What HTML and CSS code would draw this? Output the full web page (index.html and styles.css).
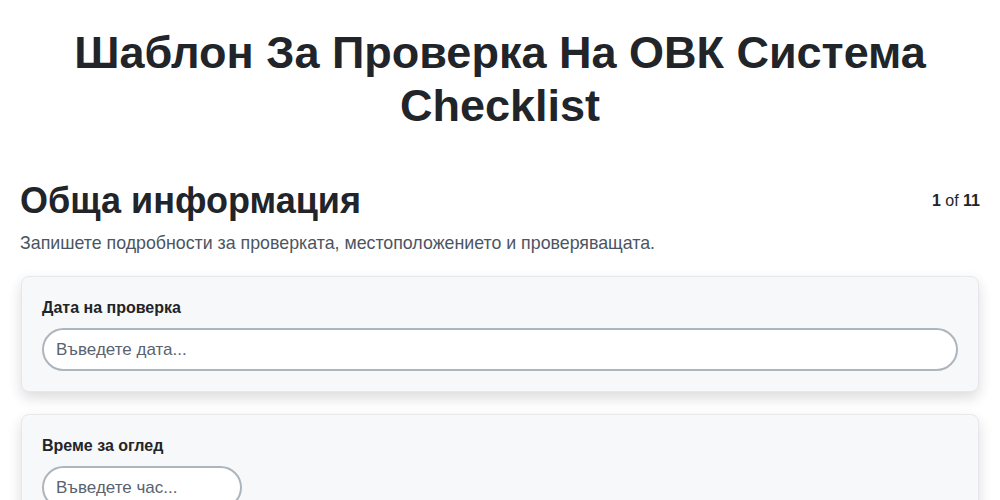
FILE: index.html
```html
<!DOCTYPE html>
<html lang="bg">
<head>
    <meta charset="UTF-8">
    <meta name="viewport" content="width=device-width, initial-scale=1.0">
    <title>Шаблон За Проверка На ОВК Система Checklist</title>
    <link rel="stylesheet" href="styles.css">
</head>
<body>

    <h1 class="page-title">Шаблон За Проверка На ОВК Система Checklist</h1>

    <div class="section">
        <div class="section-header">
            <h2 class="section-title">Обща информация</h2>
            <div class="step-counter"><b>1</b> of <b>11</b></div>
        </div>
        <p class="section-desc">Запишете подробности за проверката, местоположението и проверяващата.</p>

        <!-- Date field -->
        <div class="field-card">
            <label class="field-label" for="inspection-date">Дата на проверка</label>
            <input class="field-input" id="inspection-date" type="text" placeholder="Въведете дата...">
        </div>

        <!-- Time field -->
        <div class="field-card">
            <label class="field-label" for="inspection-time">Време за оглед</label>
            <input class="field-input short" id="inspection-time" type="text" placeholder="Въведете час...">
        </div>
    </div>

</body>
</html>
```

FILE: styles.css
```css
* {
    margin: 0;
    padding: 0;
    box-sizing: border-box;
    font-family: "Liberation Sans", Arial, sans-serif;
}

body {
    background-color: #ffffff;
    color: #212529;
    padding: 26px 20px 20px;
}

.page-title {
    font-size: 45px;
    font-weight: bold;
    line-height: 53px;
    text-align: center;
    margin-bottom: 47px;
}

.section-header {
    display: flex;
    align-items: center;
    justify-content: space-between;
}

.section-title {
    font-size: 36px;
    font-weight: bold;
    line-height: 43px;
}

.step-counter {
    font-size: 16px;
    color: #212529;
}

.section-desc {
    font-size: 17.8px;
    color: #4b5563;
    line-height: 21px;
    margin-top: 11px;
    margin-bottom: 22px;
}

.field-card {
    background-color: #f7f8fa;
    border: 1px solid #e6e8eb;
    border-radius: 8px;
    padding: 20px;
    margin: 0 1px 22px;
    box-shadow: 0 6px 14px rgba(0, 0, 0, 0.14);
}

.field-label {
    display: block;
    font-size: 16px;
    font-weight: bold;
    line-height: 21px;
    margin-bottom: 10px;
}

.field-input {
    display: block;
    width: 100%;
    height: 43px;
    padding: 0 12px;
    font-size: 17px;
    color: #212529;
    background-color: #ffffff;
    border: 2px solid #adb5bd;
    border-radius: 22px;
    outline: none;
}

.field-input::placeholder {
    color: #5a6270;
}

.field-input.short {
    width: 200px;
}
```
